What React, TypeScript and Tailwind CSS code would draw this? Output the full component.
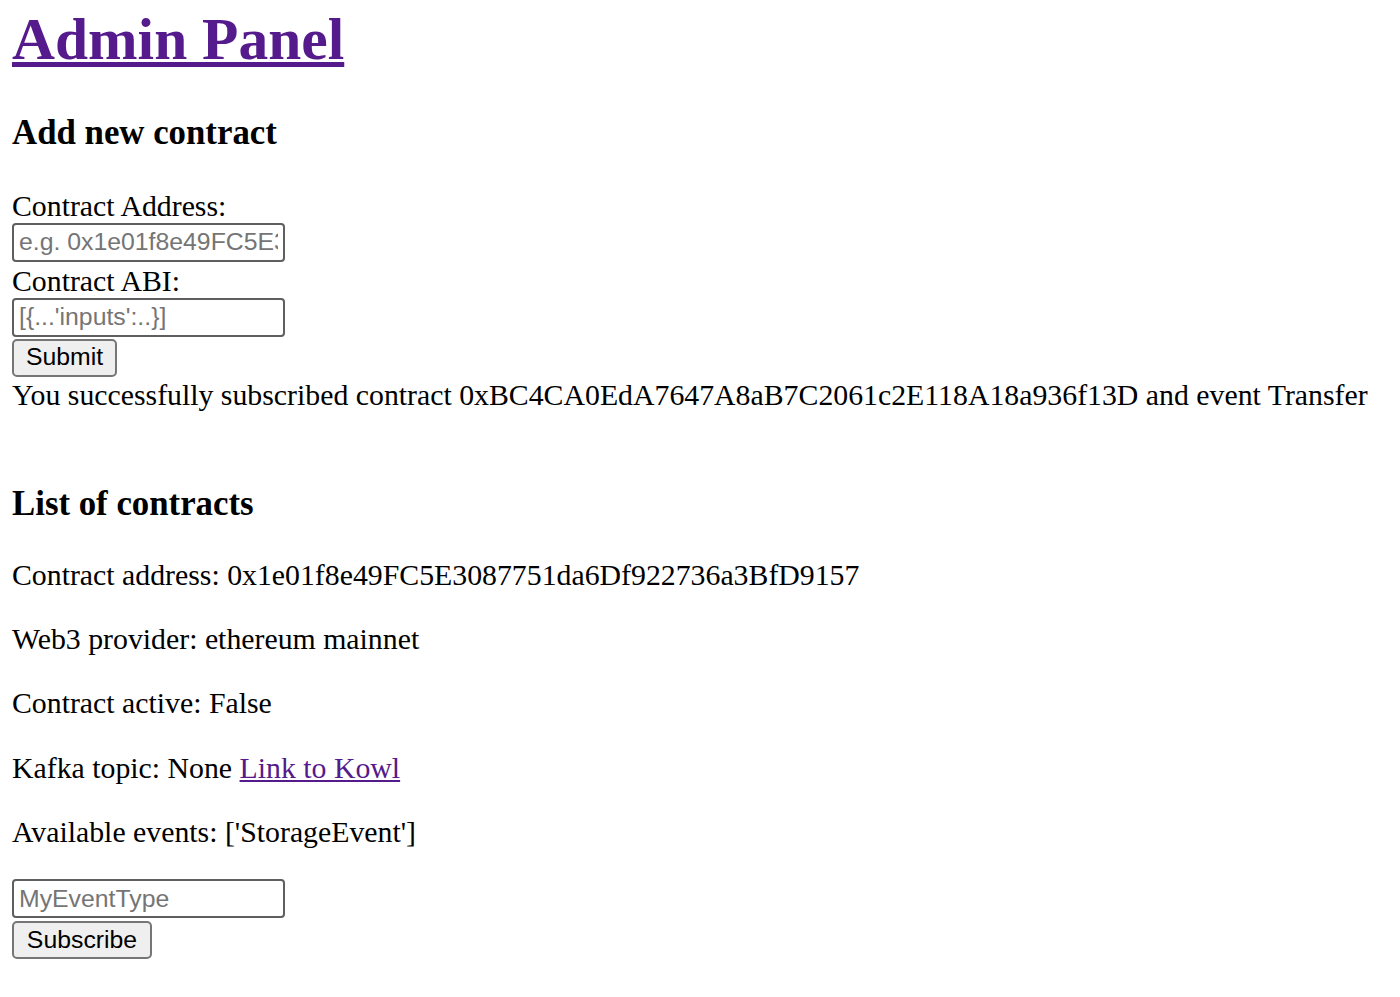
import { useState } from "react";

const serif = "font-['Liberation_Serif','Times_New_Roman',serif]";
const sans = "font-['Liberation_Sans',Arial,sans-serif]";

export default function App() {
  const [address, setAddress] = useState("");
  const [abi, setAbi] = useState("");
  const [eventType, setEventType] = useState("");

  const inputCls = `block w-[273px] h-[39px] border-2 border-[#5f5f5f] rounded-[4px] px-[5px] text-[24.8px] text-black placeholder-[#757575] bg-white outline-none ${sans}`;
  const buttonCls = `block h-[38px] border-2 border-[#767676] rounded-[5px] bg-[#efefef] text-[24.8px] text-black leading-none ${sans}`;

  return (
    <div className={`min-h-screen bg-white text-black text-[29.8px] leading-[1.149] pl-[12px] pt-[5px] ${serif}`}>
      <h1 className="text-[59.5px] font-bold leading-[1.149]">
        <a href="#" className="text-[#551a8b] underline">
          Admin Panel
        </a>
      </h1>

      <h3 className="text-[34.8px] font-bold leading-[1.149] mt-[40px] mb-[36px]">Add new contract</h3>

      <form onSubmit={(e) => e.preventDefault()}>
        <label className="block">Contract Address:</label>
        <input
          type="text"
          value={address}
          onChange={(e) => setAddress(e.target.value)}
          placeholder="e.g. 0x1e01f8e49FC5E3087751da6Df922736a3BfD9157"
          className={`${inputCls} -mt-px`}
        />
        <label className="block mt-[2px]">Contract ABI:</label>
        <input
          type="text"
          value={abi}
          onChange={(e) => setAbi(e.target.value)}
          placeholder="[{...'inputs':..}]"
          className={inputCls}
        />
        <button type="submit" className={`${buttonCls} w-[105px] mt-[2px]`}>
          Submit
        </button>
      </form>
      <div className="mt-px">
        You successfully subscribed contract 0xBC4CA0EdA7647A8aB7C2061c2E118A18a936f13D and event Transfer
      </div>

      <h3 className="text-[34.8px] font-bold leading-[1.149] mt-[72px] mb-[34px]">List of contracts</h3>

      <div className="flex flex-col gap-[30px]">
        <p>Contract address: 0x1e01f8e49FC5E3087751da6Df922736a3BfD9157</p>
        <p>Web3 provider: ethereum mainnet</p>
        <p>Contract active: False</p>
        <p>
          Kafka topic: None{" "}
          <a href="#" className="text-[#551a8b] underline">
            Link to Kowl
          </a>
        </p>
        <p>Available events: ['StorageEvent']</p>
      </div>

      <form onSubmit={(e) => e.preventDefault()} className="mt-[30px] pb-[20px]">
        <input
          type="text"
          value={eventType}
          onChange={(e) => setEventType(e.target.value)}
          placeholder="MyEventType"
          className={`${inputCls} h-[38px]`}
        />
        <button type="submit" className={`${buttonCls} w-[140px] mt-[3px]`}>
          Subscribe
        </button>
      </form>
    </div>
  );
}
